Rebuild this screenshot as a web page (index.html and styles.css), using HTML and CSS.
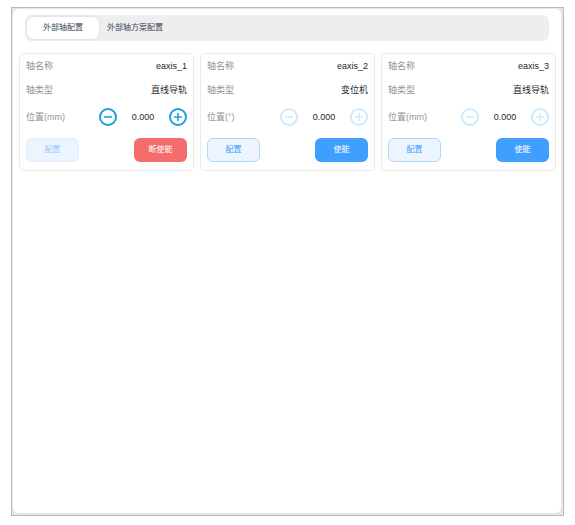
FILE: index.html
```html
<!DOCTYPE html>
<html lang="zh-CN">
<head>
<meta charset="utf-8">
<title>外部轴配置</title>
<link rel="stylesheet" href="styles.css">
</head>
<body>
<svg width="0" height="0" class="sprite" aria-hidden="true">
  <symbol id="minus" viewBox="0 0 18 18"><circle cx="9" cy="9" r="8"/><path stroke-width="1.6" d="M5 9h8"/></symbol>
  <symbol id="plus" viewBox="0 0 18 18"><circle cx="9" cy="9" r="8"/><path stroke-width="1.6" d="M5 9h8M9 5v8"/></symbol>
</svg>
<div class="frame">
  <main class="panel">
    <nav class="tabs">
      <button class="tab active" type="button">外部轴配置</button>
      <button class="tab" type="button">外部轴方案配置</button>
    </nav>
    <div class="cards">
      <section class="card">
        <div class="row"><span class="label">轴名称</span><span>eaxis_1</span></div>
        <div class="row"><span class="label">轴类型</span><span>直线导轨</span></div>
        <div class="row position"><span class="label">位置(mm)</span>
          <div class="stepper">
            <button class="step" type="button" aria-label="-"><svg><use href="#minus"/></svg></button>
            <span>0.000</span>
            <button class="step" type="button" aria-label="+"><svg><use href="#plus"/></svg></button>
          </div>
        </div>
        <div class="actions"><button class="btn plain" type="button" disabled>配置</button><button class="btn danger" type="button">断使能</button></div>
      </section>
      <section class="card">
        <div class="row"><span class="label">轴名称</span><span>eaxis_2</span></div>
        <div class="row"><span class="label">轴类型</span><span>变位机</span></div>
        <div class="row position"><span class="label">位置(°)</span>
          <div class="stepper">
            <button class="step" type="button" aria-label="-" disabled><svg><use href="#minus"/></svg></button>
            <span>0.000</span>
            <button class="step" type="button" aria-label="+" disabled><svg><use href="#plus"/></svg></button>
          </div>
        </div>
        <div class="actions"><button class="btn plain" type="button">配置</button><button class="btn primary" type="button">使能</button></div>
      </section>
      <section class="card">
        <div class="row"><span class="label">轴名称</span><span>eaxis_3</span></div>
        <div class="row"><span class="label">轴类型</span><span>直线导轨</span></div>
        <div class="row position"><span class="label">位置(mm)</span>
          <div class="stepper">
            <button class="step" type="button" aria-label="-" disabled><svg><use href="#minus"/></svg></button>
            <span>0.000</span>
            <button class="step" type="button" aria-label="+" disabled><svg><use href="#plus"/></svg></button>
          </div>
        </div>
        <div class="actions"><button class="btn plain" type="button">配置</button><button class="btn primary" type="button">使能</button></div>
      </section>
    </div>
  </main>
</div>
</body>
</html>
```
FILE: styles.css
```css
* { box-sizing: border-box; }
body {
  margin: 0;
  padding: 7px 11px 9px;
  min-height: 100vh;
  display: flex;
  background: #fff;
  color: #26282c;
  font: 9px/12px "Liberation Sans", "Noto Sans CJK SC", sans-serif;
}
button {
  font: inherit;
  border: 0;
  padding: 0;
  background: none;
}
.sprite { position: absolute; }
.frame {
  flex: 1;
  display: flex;
  border: 1px solid #b9bbbb;
  padding: 1px 2px 2px 1px;
  background: #e6e7e7;
}
.panel {
  flex: 1;
  padding: 6px 5px 6px 6px;
  border-radius: 6px;
  background: #fff;
}
.tabs {
  display: flex;
  height: 26px;
  margin: 0 7px 12px 6px;
  padding: 2px;
  border-radius: 6px;
  background: #eee;
}
.tab {
  padding: 0 8px;
  border-radius: 6px;
  color: #3a4654;
  font-size: 8px;
}
.tab.active {
  padding: 0 16px;
  background: #fff;
  box-shadow: 0 0 2px #ccc;
}
.cards {
  display: grid;
  grid-template-columns: repeat(3, 1fr);
  gap: 6px;
}
.card {
  padding: 0 6px 8px;
  border: 1px solid #e8eaec;
  border-radius: 5px;
}
.row {
  display: flex;
  align-items: center;
  justify-content: space-between;
  height: 24px;
}
.position { height: 30px; }
.label { color: #929497; }
.stepper {
  display: flex;
  align-items: center;
  justify-content: space-between;
  width: 88px;
}
.step {
  width: 18px;
  height: 18px;
  color: #1b9fe0;
}
.step:disabled { color: #cdeafb; }
.step svg {
  display: block;
  width: 18px;
  height: 18px;
  fill: none;
  stroke: currentColor;
}
.step svg { stroke-width: 2; }
.actions {
  display: flex;
  justify-content: space-between;
  margin-top: 6px;
}
.btn {
  width: 53px;
  height: 24px;
  border-radius: 6px;
  color: #fff;
  font-size: 8px;
}
.plain {
  border: 1px solid #b3d8f5;
  background: #ecf5ff;
  color: #409eff;
}
.plain:disabled {
  border-color: #deedfc;
  color: #97c9fb;
}
.danger { background: #f56c6c; }
.primary { background: #409eff; }
```
